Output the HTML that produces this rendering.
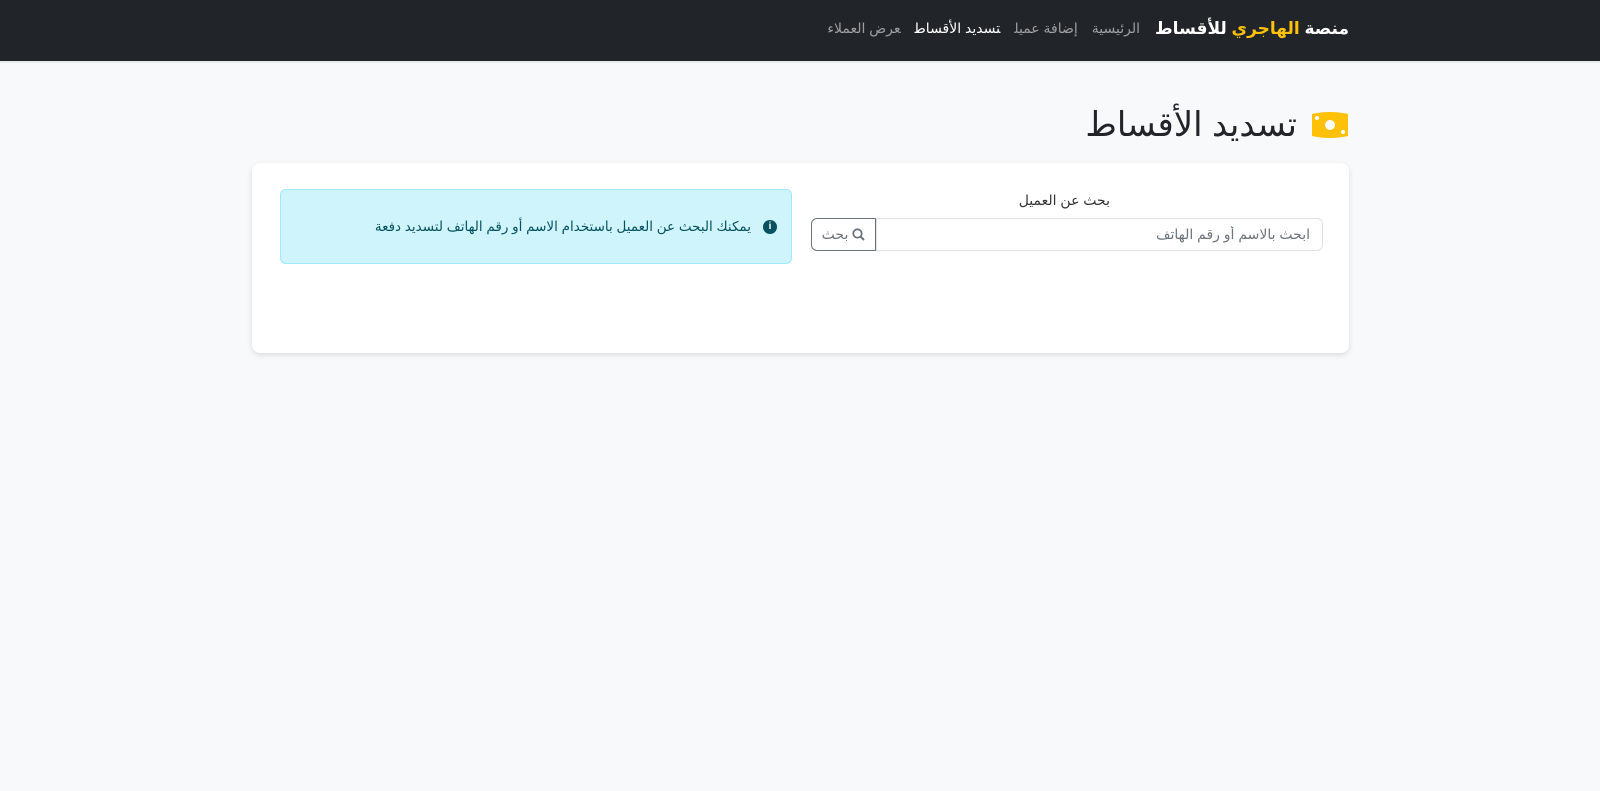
<!DOCTYPE html>
<html dir="rtl" lang="ar"><head><meta charset="utf-8"><style>
*{box-sizing:border-box;margin:0;padding:0}
body{width:1600px;height:791px;background:#f8f9fa;font-family:"Liberation Sans","DejaVu Sans",sans-serif;color:#212529;position:relative;overflow:hidden}
nav{position:absolute;top:0;left:0;width:1600px;height:63px;background:#212529;border-bottom:2px solid #e9ecef}
.brand{position:absolute;right:251px;top:19px;font-size:17px;font-weight:bold;color:#fff;white-space:nowrap}
.brand span{color:#ffc107}
.links{position:absolute;right:460px;top:20px;font-size:14px;color:rgba(255,255,255,.55);white-space:nowrap}
.links a{margin-left:14px}
.links .act{color:#fff}
h1{position:absolute;right:251px;top:105px;font-size:34px;font-weight:500;white-space:nowrap;display:flex;align-items:center;gap:14px}
.card{position:absolute;left:252px;top:163px;width:1097px;height:190px;background:#fff;border-radius:8px;box-shadow:0 2px 6px rgba(0,0,0,.12)}
.alert{position:absolute;left:280px;top:189px;width:512px;height:75px;background:#cff4fc;border:1px solid #9eeaf9;border-radius:6px;color:#055160;font-size:13.5px;display:flex;align-items:center;padding-right:14px;gap:12px;direction:rtl}
.ic{width:14px;height:14px;border-radius:50%;background:#055160;color:#fff;font-size:10px;font-weight:bold;text-align:center;line-height:14px}
input{position:absolute;left:876px;top:218px;width:447px;height:33px;border:1px solid #dee2e6;border-radius:0 6px 6px 0;font-size:14px;padding:0 12px;color:#6c757d;font-family:inherit;direction:rtl;background:#fff}
.btn{position:absolute;left:811px;top:218px;width:65px;height:33px;border:1px solid #6c757d;border-radius:6px 0 0 6px;color:#6c757d;font-size:14px;display:flex;align-items:center;justify-content:center;gap:4px}
</style></head><body>
<nav><div class="brand">منصة <span>الهاجري</span> للأقساط</div>
<div class="links"><a>الرئيسية</a><a>إضافة عميل</a><a class="act">تسديد الأقساط</a><a>عرض العملاء</a></div></nav>
<h1><svg width="38" height="30" viewBox="0 0 38 30"><path d="M1 4 Q19 0 37 4 V26 Q19 30 1 26Z" fill="#ffc107"/><circle cx="19" cy="15" r="5" fill="#fff"/><circle cx="6" cy="8" r="2" fill="#fff"/><circle cx="32" cy="22" r="2" fill="#fff"/></svg>تسديد الأقساط</h1>
<div class="card"></div>
<div style="position:absolute;right:490px;top:192px;font-size:14px;color:#333;white-space:nowrap">بحث عن العميل</div>
<input value="ابحث بالاسم أو رقم الهاتف">
<div class="btn"><svg width="13" height="13" viewBox="0 0 13 13"><circle cx="5.5" cy="5.5" r="4.2" fill="none" stroke="#6c757d" stroke-width="1.8"/><path d="M8.5 8.5 12 12" stroke="#6c757d" stroke-width="2"/></svg>بحث</div>
<div class="alert"><div class="ic">i</div>يمكنك البحث عن العميل باستخدام الاسم أو رقم الهاتف لتسديد دفعة</div>
</body></html>
